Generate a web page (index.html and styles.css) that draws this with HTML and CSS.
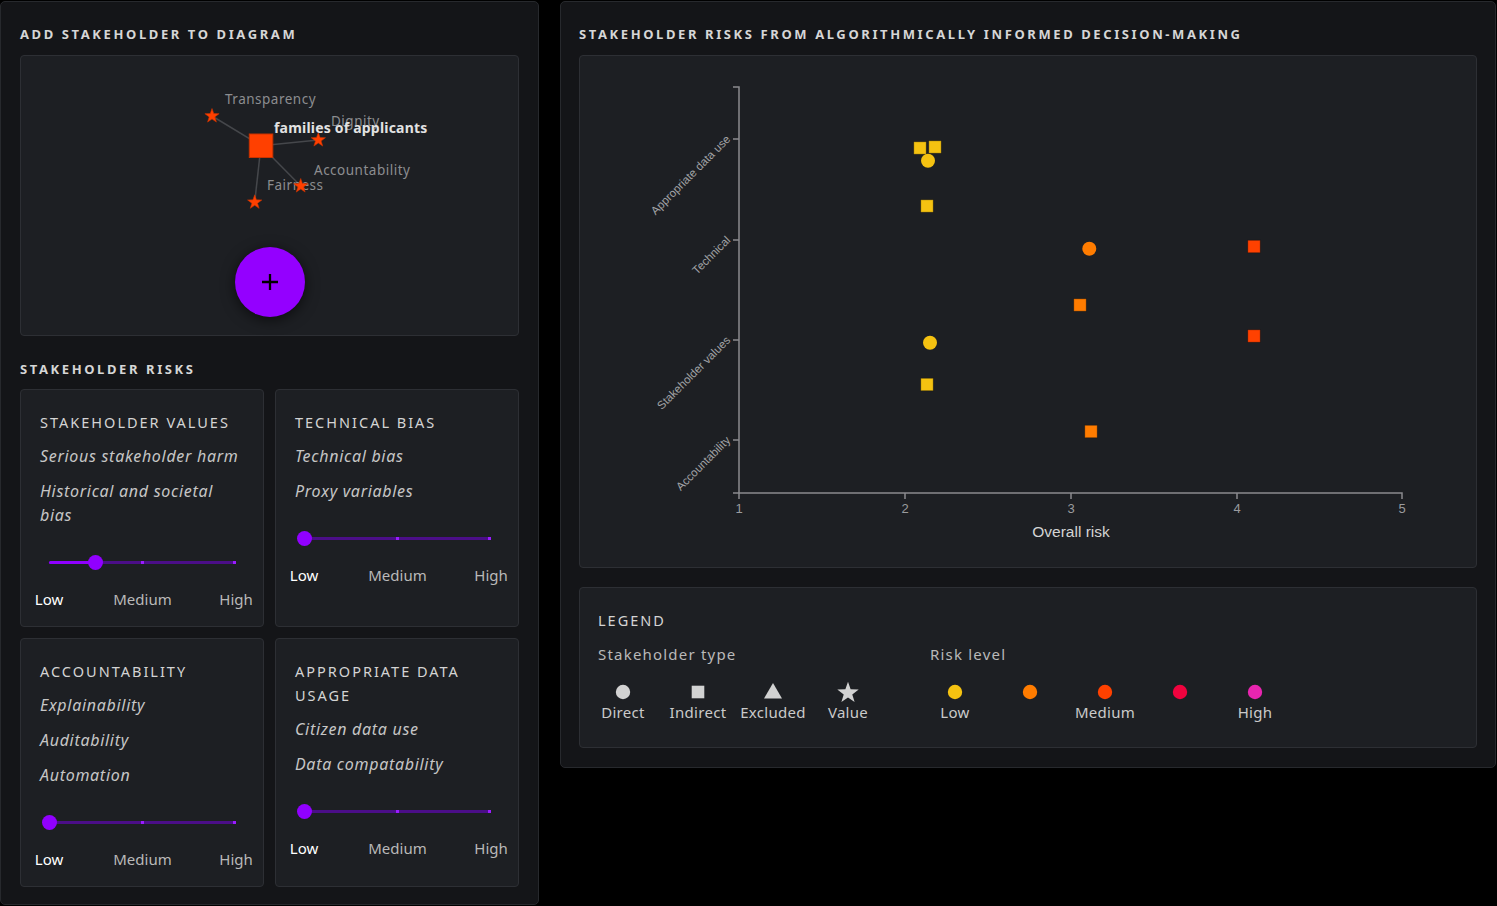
FILE: index.html
```html
<!DOCTYPE html>
<html lang="en">
<head>
<meta charset="utf-8">
<title>Stakeholder risks</title>
<link rel="stylesheet" href="styles.css">
</head>
<body>
<div class="app">
  <section class="panel panel-left">
    <h2 class="section-title">Add stakeholder to diagram</h2>
    <div class="box diagram">
      <svg class="diagram-svg" viewBox="0 0 497 191" xmlns="http://www.w3.org/2000/svg">
        <g class="links">
          <line x1="240" y1="89.7" x2="191" y2="60"/>
          <line x1="240" y1="89.7" x2="297.3" y2="84"/>
          <line x1="240" y1="89.7" x2="279.7" y2="130"/>
          <line x1="240" y1="89.7" x2="233.7" y2="146.3"/>
        </g>
        <text class="value-label" x="204" y="48">Transparency</text>
        <text class="value-label" x="310" y="70">Dignity</text>
        <text class="value-label" x="293" y="119">Accountability</text>
        <text class="value-label" x="246" y="134">Fairness</text>
        <g class="node-star">
          <path transform="translate(191 60)" d="M0,-7.5 L1.76,-2.43 L7.13,-2.32 L2.85,0.93 L4.41,6.07 L0,3 L-4.41,6.07 L-2.85,0.93 L-7.13,-2.32 L-1.76,-2.43Z"/>
          <path transform="translate(297.3 84)" d="M0,-7.5 L1.76,-2.43 L7.13,-2.32 L2.85,0.93 L4.41,6.07 L0,3 L-4.41,6.07 L-2.85,0.93 L-7.13,-2.32 L-1.76,-2.43Z"/>
          <path transform="translate(279.7 130)" d="M0,-7.5 L1.76,-2.43 L7.13,-2.32 L2.85,0.93 L4.41,6.07 L0,3 L-4.41,6.07 L-2.85,0.93 L-7.13,-2.32 L-1.76,-2.43Z"/>
          <path transform="translate(233.7 146.3)" d="M0,-7.5 L1.76,-2.43 L7.13,-2.32 L2.85,0.93 L4.41,6.07 L0,3 L-4.41,6.07 L-2.85,0.93 L-7.13,-2.32 L-1.76,-2.43Z"/>
        </g>
        <rect class="node-square" x="228.3" y="78" width="23.5" height="23.5"/>
        <text class="stakeholder-label" x="253" y="77.3">families of applicants</text>
      </svg>
      <button class="add-btn" type="button" aria-label="Add stakeholder">
        <svg class="plus" viewBox="0 0 14 14" xmlns="http://www.w3.org/2000/svg"><path d="M7 0V14M0 7H14"/></svg>
      </button>
    </div>

    <h2 class="section-title risks-title">Stakeholder risks</h2>
    <div class="risk-grid">
      <div class="box risk-card">
        <h3 class="card-title">Stakeholder values</h3>
        <div class="risk-items">
          <p class="risk-item">Serious stakeholder harm</p>
          <p class="risk-item">Historical and societal bias</p>
        </div>
        <div class="slider">
          <div class="slider-track"><div class="slider-fill" style="width:25%"></div><span class="slider-mark mark-mid"></span><span class="slider-mark mark-end"></span></div>
          <div class="slider-thumb" style="left:25%"></div>
        </div>
        <div class="slider-labels"><span class="active">Low</span><span>Medium</span><span>High</span></div>
      </div>

      <div class="box risk-card">
        <h3 class="card-title">Technical bias</h3>
        <div class="risk-items">
          <p class="risk-item">Technical bias</p>
          <p class="risk-item">Proxy variables</p>
        </div>
        <div class="slider">
          <div class="slider-track"><div class="slider-fill" style="width:0%"></div><span class="slider-mark mark-mid"></span><span class="slider-mark mark-end"></span></div>
          <div class="slider-thumb" style="left:0%"></div>
        </div>
        <div class="slider-labels"><span class="active">Low</span><span>Medium</span><span>High</span></div>
      </div>

      <div class="box risk-card">
        <h3 class="card-title">Accountability</h3>
        <div class="risk-items">
          <p class="risk-item">Explainability</p>
          <p class="risk-item">Auditability</p>
          <p class="risk-item">Automation</p>
        </div>
        <div class="slider">
          <div class="slider-track"><div class="slider-fill" style="width:0%"></div><span class="slider-mark mark-mid"></span><span class="slider-mark mark-end"></span></div>
          <div class="slider-thumb" style="left:0%"></div>
        </div>
        <div class="slider-labels"><span class="active">Low</span><span>Medium</span><span>High</span></div>
      </div>

      <div class="box risk-card">
        <h3 class="card-title">Appropriate data usage</h3>
        <div class="risk-items">
          <p class="risk-item">Citizen data use</p>
          <p class="risk-item">Data compatability</p>
        </div>
        <div class="slider">
          <div class="slider-track"><div class="slider-fill" style="width:0%"></div><span class="slider-mark mark-mid"></span><span class="slider-mark mark-end"></span></div>
          <div class="slider-thumb" style="left:0%"></div>
        </div>
        <div class="slider-labels"><span class="active">Low</span><span>Medium</span><span>High</span></div>
      </div>
    </div>
  </section>

  <section class="panel panel-right">
    <h2 class="section-title">Stakeholder risks from algorithmically informed decision-making</h2>
    <div class="box chart">
      <svg class="chart-svg" viewBox="0 0 895 511" xmlns="http://www.w3.org/2000/svg">
        <g class="axis">
          <path d="M153,31 H159 V437 H153"/>
          <path d="M153,83 H159 M153,184 H159 M153,284 H159 M153,384 H159"/>
          <path d="M159,443 V437 H822 V443"/>
          <path d="M325,437 V443 M491,437 V443 M657,437 V443"/>
        </g>
        <g class="y-labels">
          <text transform="translate(151 84) rotate(-45)">Appropriate data use</text>
          <text transform="translate(151 185) rotate(-45)">Technical</text>
          <text transform="translate(151 285) rotate(-45)">Stakeholder values</text>
          <text transform="translate(151 385) rotate(-45)">Accountability</text>
        </g>
        <g class="x-labels">
          <text x="159" y="457">1</text>
          <text x="325" y="457">2</text>
          <text x="491" y="457">3</text>
          <text x="657" y="457">4</text>
          <text x="822" y="457">5</text>
        </g>
        <text class="x-title" x="491" y="481">Overall risk</text>
        <g class="points">
          <rect class="risk-low" x="333.8" y="85.8" width="12.4" height="12.4"/>
          <rect class="risk-low" x="348.8" y="84.8" width="12.4" height="12.4"/>
          <rect class="risk-low" x="340.8" y="143.8" width="12.4" height="12.4"/>
          <rect class="risk-med" x="667.8" y="184.3" width="12.4" height="12.4"/>
          <rect class="risk-lowmed" x="493.8" y="242.8" width="12.4" height="12.4"/>
          <rect class="risk-med" x="667.8" y="273.8" width="12.4" height="12.4"/>
          <rect class="risk-low" x="340.8" y="322.3" width="12.4" height="12.4"/>
          <rect class="risk-lowmed" x="504.8" y="369.3" width="12.4" height="12.4"/>
          <circle class="risk-low" cx="348" cy="104.7" r="7"/>
          <circle class="risk-lowmed" cx="509.3" cy="192.7" r="7"/>
          <circle class="risk-low" cx="350" cy="286.7" r="7"/>
        </g>
      </svg>
    </div>

    <div class="box legend">
      <h3 class="card-title">Legend</h3>
      <div class="legend-groups">
        <div class="legend-group">
          <div class="legend-heading">Stakeholder type</div>
          <div class="legend-items">
            <div class="legend-item">
              <svg class="legend-icon" viewBox="0 0 24 20"><circle class="type-icon" cx="12" cy="10" r="7.2"/></svg>
              <span>Direct</span>
            </div>
            <div class="legend-item">
              <svg class="legend-icon" viewBox="0 0 24 20"><rect class="type-icon" x="5.7" y="3.7" width="12.6" height="12.6"/></svg>
              <span>Indirect</span>
            </div>
            <div class="legend-item">
              <svg class="legend-icon" viewBox="0 0 24 20"><path class="type-icon" d="M12,1 L21,16.5 L3,16.5Z"/></svg>
              <span>Excluded</span>
            </div>
            <div class="legend-item">
              <svg class="legend-icon" viewBox="0 0 24 20"><path class="type-icon" transform="translate(12 11) scale(1.5)" d="M0,-7.5 L1.76,-2.43 L7.13,-2.32 L2.85,0.93 L4.41,6.07 L0,3 L-4.41,6.07 L-2.85,0.93 L-7.13,-2.32 L-1.76,-2.43Z"/></svg>
              <span>Value</span>
            </div>
          </div>
        </div>
        <div class="legend-group">
          <div class="legend-heading">Risk level</div>
          <div class="legend-items">
            <div class="legend-item">
              <svg class="legend-icon" viewBox="0 0 24 20"><circle class="risk-low" cx="12" cy="10" r="7.2"/></svg>
              <span>Low</span>
            </div>
            <div class="legend-item">
              <svg class="legend-icon" viewBox="0 0 24 20"><circle class="risk-lowmed" cx="12" cy="10" r="7.2"/></svg>
              <span></span>
            </div>
            <div class="legend-item">
              <svg class="legend-icon" viewBox="0 0 24 20"><circle class="risk-med" cx="12" cy="10" r="7.2"/></svg>
              <span>Medium</span>
            </div>
            <div class="legend-item">
              <svg class="legend-icon" viewBox="0 0 24 20"><circle class="risk-medhigh" cx="12" cy="10" r="7.2"/></svg>
              <span></span>
            </div>
            <div class="legend-item">
              <svg class="legend-icon" viewBox="0 0 24 20"><circle class="risk-high" cx="12" cy="10" r="7.2"/></svg>
              <span>High</span>
            </div>
          </div>
        </div>
      </div>
    </div>
  </section>
</div>
</body>
</html>
```

FILE: styles.css
```css
* {
  box-sizing: border-box;
  margin: 0;
  padding: 0;
}

html, body {
  background: #000;
}

body {
  font-family: "Noto Sans", "Open Sans", sans-serif;
  color: #d0d0d0;
  overflow: hidden;
}

.app {
  display: flex;
  align-items: flex-start;
  gap: 21px;
  padding-top: 1px;
}

.panel {
  background: #141518;
  border: 1px solid #27292d;
  border-radius: 5px;
}

.panel-left {
  width: 539px;
  flex: none;
  padding: 20px 19px 17px;
}

.panel-right {
  width: 936px;
  flex: none;
  padding: 20px 18px 19px;
}

.section-title {
  font-size: 13px;
  font-weight: 700;
  letter-spacing: 2.6px;
  line-height: 24px;
  text-transform: uppercase;
  color: #d6d6d6;
  margin-bottom: 9px;
}

.risks-title {
  margin-top: 21px;
  margin-bottom: 8px;
}

.box {
  background: #1d1f23;
  border: 1px solid #2d2f34;
  border-radius: 4px;
}

/* Diagram */
.diagram {
  display: flex;
  flex-direction: column;
  align-items: center;
  padding-bottom: 18px;
}

.diagram-svg {
  display: block;
  width: 497px;
  height: 191px;
}

.links line {
  stroke: #45474b;
  stroke-width: 1.5;
}

.node-star path {
  fill: #ff4000;
  stroke: #c93300;
  stroke-width: 0.6;
}

.node-square {
  fill: #ff4000;
  stroke: #c93300;
  stroke-width: 1;
}

.value-label {
  font-family: "Noto Sans", sans-serif;
  font-size: 13.5px;
  letter-spacing: 0.5px;
  fill: #8c8d90;
}

.stakeholder-label {
  font-family: "Noto Sans", sans-serif;
  font-size: 14px;
  font-weight: 700;
  letter-spacing: 0.2px;
  fill: #e2e2e2;
}

.add-btn {
  width: 70px;
  height: 70px;
  border-radius: 50%;
  border: none;
  background: #9400ff;
  box-shadow: 0 3px 14px rgba(0, 0, 0, 0.6);
  display: flex;
  align-items: center;
  justify-content: center;
  cursor: pointer;
}

.plus {
  width: 16px;
  height: 16px;
  display: block;
}

.plus path {
  stroke: #000;
  stroke-width: 2;
  fill: none;
}

/* Risk cards */
.risk-grid {
  display: grid;
  grid-template-columns: 1fr 1fr;
  gap: 11px;
}

.risk-card {
  padding: 20px 19px 15px;
}

.card-title {
  font-size: 14.5px;
  font-weight: 400;
  letter-spacing: 2px;
  line-height: 24px;
  text-transform: uppercase;
  color: #d4d4d4;
  margin-bottom: 10px;
}

.risk-items {
  display: flex;
  flex-direction: column;
  gap: 11px;
}

.risk-item {
  font-size: 16px;
  font-style: italic;
  line-height: 24px;
  letter-spacing: 0.7px;
  color: #c6c6c6;
}

.slider {
  position: relative;
  height: 20px;
  margin: 25px 8px 0 9px;
}

.slider-track {
  position: absolute;
  left: 0;
  right: 0;
  top: 8.5px;
  height: 3px;
  background: #4b0e88;
  border-radius: 2px;
}

.slider-fill {
  height: 100%;
  background: #8f00ff;
  border-radius: 2px;
}

.slider-mark {
  position: absolute;
  top: 0;
  width: 3px;
  height: 3px;
  background: #9a1cff;
}

.mark-mid {
  left: calc(50% - 1.5px);
}

.mark-end {
  right: 0;
}

.slider-thumb {
  position: absolute;
  top: 2.5px;
  width: 15px;
  height: 15px;
  margin-left: -7.5px;
  border-radius: 50%;
  background: #9100ff;
}

.slider-labels {
  display: flex;
  justify-content: space-between;
  margin: 15px 8px 0 9px;
  font-size: 15px;
  line-height: 24px;
  color: #b9b9b9;
}

.slider-labels span {
  width: 0;
  display: flex;
  justify-content: center;
  white-space: nowrap;
}

.slider-labels .active {
  color: #ffffff;
}

/* Chart */
.chart {
  height: 513px;
}

.chart-svg {
  display: block;
  width: 895px;
  height: 511px;
}

.axis path {
  stroke: #8a8b8e;
  stroke-width: 1.5;
  fill: none;
}

.y-labels text {
  font-family: "Liberation Sans", Arial, sans-serif;
  font-size: 11.5px;
  fill: #a2a3a6;
  text-anchor: end;
}

.x-labels text {
  font-family: "Liberation Sans", Arial, sans-serif;
  font-size: 13px;
  fill: #9a9b9e;
  text-anchor: middle;
}

.x-title {
  font-family: "Liberation Sans", Arial, sans-serif;
  font-size: 15.5px;
  fill: #d4d4d4;
  text-anchor: middle;
}

.points rect {
  stroke: rgba(0, 0, 0, 0.25);
  stroke-width: 1;
}

.risk-low {
  fill: #f5c211;
}

.risk-lowmed {
  fill: #ff7c00;
}

.risk-med {
  fill: #ff4100;
}

.risk-medhigh {
  fill: #f0033e;
}

.risk-high {
  fill: #e825b0;
}

/* Legend */
.legend {
  margin-top: 19px;
  padding: 20px 18px 25px;
}

.legend-groups {
  display: flex;
  gap: 57px;
}

.legend-heading {
  font-size: 15px;
  letter-spacing: 1.2px;
  line-height: 24px;
  color: #b9b9b9;
  margin-bottom: 16px;
}

.legend-items {
  display: flex;
  gap: 25px;
}

.legend-item {
  width: 50px;
  display: flex;
  flex-direction: column;
  align-items: center;
}

.legend-icon {
  display: block;
  width: 24px;
  height: 20px;
  overflow: visible;
}

.type-icon {
  fill: #d2d2d2;
}

.legend-item span {
  font-size: 15px;
  line-height: 20px;
  letter-spacing: 0.3px;
  white-space: nowrap;
  color: #cacaca;
  min-height: 20px;
}
```
